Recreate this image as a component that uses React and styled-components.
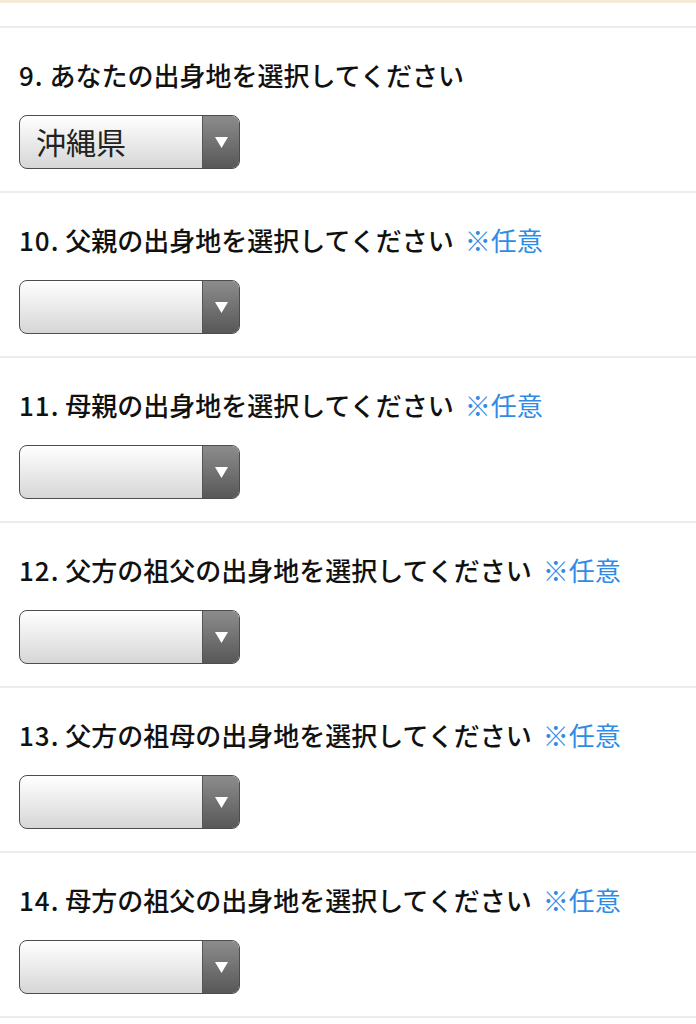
import React from "react";
import styled, { createGlobalStyle } from "styled-components";

const GlobalStyle = createGlobalStyle`
  body {
    margin: 0;
    background: #fff;
    font-family: "Noto Sans CJK JP", "Noto Sans", sans-serif;
    color: #111;
  }
`;

const Page = styled.div`
  width: 696px;
  height: 1024px;
  overflow: hidden;
  background: #fff;
`;

const TopStrip = styled.div`
  height: 28px;
  box-sizing: border-box;
  border-top: 3px solid #f4ead6;
  border-bottom: 2px solid #ececec;
`;

const Section = styled.section`
  height: 165px;
  box-sizing: border-box;
  border-bottom: 2px solid #ececec;
  padding: 30px 0 0 19px;
  display: flex;
  flex-direction: column;
  gap: 23px;
`;

const Title = styled.h2`
  margin: 0;
  font-size: 26px;
  line-height: 34px;
  font-weight: 500;
  color: #111;
  white-space: nowrap;
`;

const Num = styled.span`
  letter-spacing: 1px;
`;

const Optional = styled.span`
  color: #2f8be6;
  font-weight: 400;
  margin-left: 11px;
`;

const Select = styled.div`
  width: 221px;
  height: 54px;
  box-sizing: border-box;
  border: 1.5px solid #4d4d4d;
  border-radius: 8px;
  overflow: hidden;
  display: flex;
  background: linear-gradient(#ffffff, #d6d6d6);
`;

const Value = styled.span`
  flex: 1;
  padding-left: 16px;
  font-size: 30px;
  line-height: 50px;
  color: #222;
  font-weight: 400;
`;

const Arrow = styled.span`
  width: 36px;
  display: flex;
  align-items: center;
  justify-content: center;
  border-left: 1px solid #555;
  background: linear-gradient(#8c8c8c, #585858);
`;

const questions = [
  { no: 9, text: "あなたの出身地を選択してください", value: "沖縄県" },
  { no: 10, text: "父親の出身地を選択してください", optional: true },
  { no: 11, text: "母親の出身地を選択してください", optional: true },
  { no: 12, text: "父方の祖父の出身地を選択してください", optional: true },
  { no: 13, text: "父方の祖母の出身地を選択してください", optional: true },
  { no: 14, text: "母方の祖父の出身地を選択してください", optional: true },
];

const App = () => {
  return (
    <Page>
      <GlobalStyle />
      <TopStrip />
      {questions.map((q) => (
        <Section key={q.no}>
          <Title>
            <Num>{q.no}.</Num> {q.text}
            {q.optional && <Optional>※任意</Optional>}
          </Title>
          <Select>
            <Value>{q.value}</Value>
            <Arrow>
              <svg width="13" height="11" viewBox="0 0 13 11">
                <path d="M0 0 H13 L6.5 11 Z" fill="#fff" />
              </svg>
            </Arrow>
          </Select>
        </Section>
      ))}
    </Page>
  );
};

export default App;
